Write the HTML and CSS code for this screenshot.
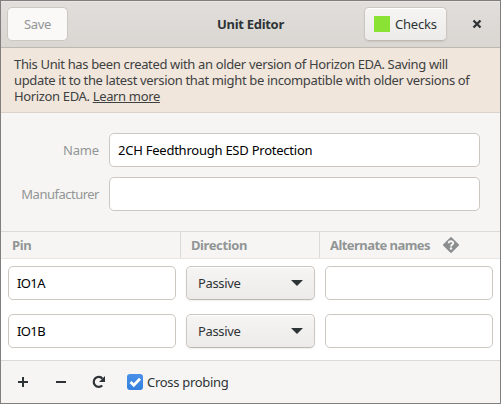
FILE: index.html
```
<!DOCTYPE html>
<html lang="en">
<head>
<meta charset="utf-8">
<title>Unit Editor</title>
<link rel="stylesheet" href="styles.css">
</head>
<body>
<div class="window">
  <header class="titlebar">
    <button class="btn save" disabled>Save</button>
    <h1 class="title">Unit Editor</h1>
    <div class="actions">
      <button class="btn checks"><span class="swatch"></span><span>Checks</span></button>
      <button class="close" aria-label="Close"><svg width="16" height="16" viewBox="0 0 16 16"><path d="M4.500 4.500l7 7M11.500 4.500l-7 7" stroke="#2e3436" stroke-width="2.300" fill="none"/></svg></button>
    </div>
  </header>
  <div class="infobar">This Unit has been created with an older version of Horizon EDA. Saving will<br>update it to the latest version that might be incompatible with older versions of<br>Horizon EDA. <a>Learn more</a></div>
  <div class="form">
    <label class="label-name">Name</label><div class="entry name">2CH Feedthrough ESD Protection</div>
    <label>Manufacturer</label><div class="entry"></div>
  </div>
  <div class="table">
    <div class="head">
      <div>Pin</div>
      <div class="dir">Direction</div>
      <div class="alt"><span>Alternate names</span><svg width="16" height="16" viewBox="0 0 16 16"><path d="M7.200.4a1.100 1.100 0 0 1 1.600 0l6.800 6.800a1.100 1.100 0 0 1 0 1.600l-6.800 6.800a1.100 1.100 0 0 1-1.600 0L.4 8.800a1.100 1.100 0 0 1 0-1.600z" fill="#8b8e8f"/><path d="M5.700 6.300C5.700 3.700 10.300 3.700 10.300 6C10.300 7.700 8 7.500 8 9.600" stroke="#f6f5f4" stroke-width="1.900" fill="none"/><circle cx="8" cy="11.500" r="1.200" fill="#f6f5f4"/></svg></div>
    </div>
    <div class="row">
      <div class="entry pin">IO1A</div>
      <div class="btn combo"><span>Passive</span><svg width="12" height="6" viewBox="0 0 12 6"><path d="M0 0h12L6 6z" fill="#2e3436"/></svg></div>
      <div class="entry"></div>
    </div>
    <div class="row">
      <div class="entry pin">IO1B</div>
      <div class="btn combo"><span>Passive</span><svg width="12" height="6" viewBox="0 0 12 6"><path d="M0 0h12L6 6z" fill="#2e3436"/></svg></div>
      <div class="entry"></div>
    </div>
  </div>
  <footer class="toolbar">
    <svg width="16" height="16" viewBox="0 0 16 16"><path d="M3 8h10M8 3v10" stroke="#2e3436" stroke-width="2"/></svg>
    <svg width="16" height="16" viewBox="0 0 16 16"><path d="M3 8h10" stroke="#2e3436" stroke-width="2"/></svg>
    <svg width="16" height="16" viewBox="0 0 16 16"><path d="M11.200 11.500A5 5 0 1 1 11.500 4.600" stroke="#2e3436" stroke-width="2.200" fill="none"/><path d="M14 2v6H8z" fill="#2e3436"/></svg>
    <div class="check"><span class="box"><svg width="16" height="16" viewBox="0 0 16 16"><path d="M3.500 8l3.300 3.200 6.200-6.400" stroke="#fff" stroke-width="2.800" fill="none"/></svg></span><span>Cross probing</span></div>
  </footer>
</div>
</body>
</html>
```
FILE: styles.css
```
* { box-sizing: border-box; }
body {
  margin: 0;
  font: 13px/16px "Noto Sans", sans-serif;
  letter-spacing: -.35px;
  color: #2e3436;
}
svg { display: block; flex: none; }
.window {
  width: 501px;
  height: 404px;
  border: 1px solid #807f7d;
  background: #f6f5f4;
  display: flex;
  flex-direction: column;
  overflow: hidden;
}
.titlebar {
  height: 47px;
  padding: 0 6px;
  display: grid;
  grid-template-columns: 1fr auto 1fr;
  align-items: center;
  background: linear-gradient(#e1dedb, #dad6d2);
  border-bottom: 1px solid #bfb8b1;
  box-shadow: inset 0 1px #e9e6e4;
}
.btn {
  height: 34px;
  border: 1px solid #cdc7c2;
  border-bottom-color: #bfb8b1;
  border-radius: 5px;
  background: linear-gradient(#f6f5f4, #edebe9);
  box-shadow: inset 0 1px #fff, 0 1px 2px rgba(0, 0, 0, .07);
  font: inherit;
  letter-spacing: inherit;
  color: inherit;
  display: flex;
  align-items: center;
}
.save {
  width: 61px;
  padding: 0;
  justify-content: center;
  justify-self: start;
  background: #faf9f8;
  border-color: #cdc7c2;
  box-shadow: none;
  color: #929595;
}
.title { margin: 0; font-size: 13px; font-weight: 700; letter-spacing: -.3px; }
.actions { display: flex; justify-content: flex-end; align-items: center; }
.checks { width: 83px; padding: 0 8px; gap: 5px; letter-spacing: -.2px; }
.swatch { width: 16px; height: 16px; background: #8ae234; flex: none; margin-left: 1px; }
.close { width: 34px; height: 34px; margin-left: 13px; padding: 0; border: 0; background: none; display: grid; place-items: center; }
.infobar {
  height: 65px;
  padding: 8px 13px;
  background: #f1e6db;
  border-bottom: 1px solid #dbd3cb;
  white-space: nowrap;
  color: #3d4142;
}
.infobar a { text-decoration: underline; }
.form {
  height: 118px;
  padding: 20px 20px 0 0;
  display: grid;
  grid-template-columns: 98px 1fr;
  grid-auto-rows: 34px;
  row-gap: 10px;
  column-gap: 10px;
  align-items: center;
}
.form label { text-align: right; color: #929595; letter-spacing: -.5px; }
.form .label-name { letter-spacing: -.15px; }
.entry {
  height: 34px;
  border: 1px solid #cdc7c2;
  border-radius: 5px;
  background: #fff;
  padding: 0 8px;
  line-height: 32px;
  color: #000;
  white-space: nowrap;
}
.name { letter-spacing: -.24px; }
.pin { letter-spacing: -.6px; }
.table { height: 129px; background: #fff; border-top: 1px solid #dcdad7; }
.head {
  height: 27px;
  display: grid;
  grid-template-columns: 180px 139px 1fr;
  background: #f6f5f4;
  border-bottom: 1px solid #e8e6e4;
  color: #929595;
  font-weight: 700;
  letter-spacing: -.4px;
}
.head > div { display: flex; align-items: center; padding-left: 11px; border-right: 1px solid #dcdad7; }
.head > .dir { padding-left: 10px; }
.head > .alt { border-right: 0; gap: 13px; padding-left: 10px; letter-spacing: -.55px; }
.row {
  height: 48px;
  padding: 7px 7px 0;
  display: grid;
  grid-template-columns: 168px 129px 168px;
  column-gap: 10px;
}
.combo { justify-content: space-between; padding: 0 11px; }
.toolbar {
  height: 43px;
  border-top: 1px solid #dcdad7;
  padding-left: 14px;
  display: flex;
  align-items: center;
  gap: 22px;
}
.check { display: flex; align-items: center; gap: 4px; margin-left: -2px; white-space: nowrap; letter-spacing: -.3px; }
.box { width: 16px; height: 16px; border-radius: 3px; background: linear-gradient(#4a90e8, #3380df); }
```
